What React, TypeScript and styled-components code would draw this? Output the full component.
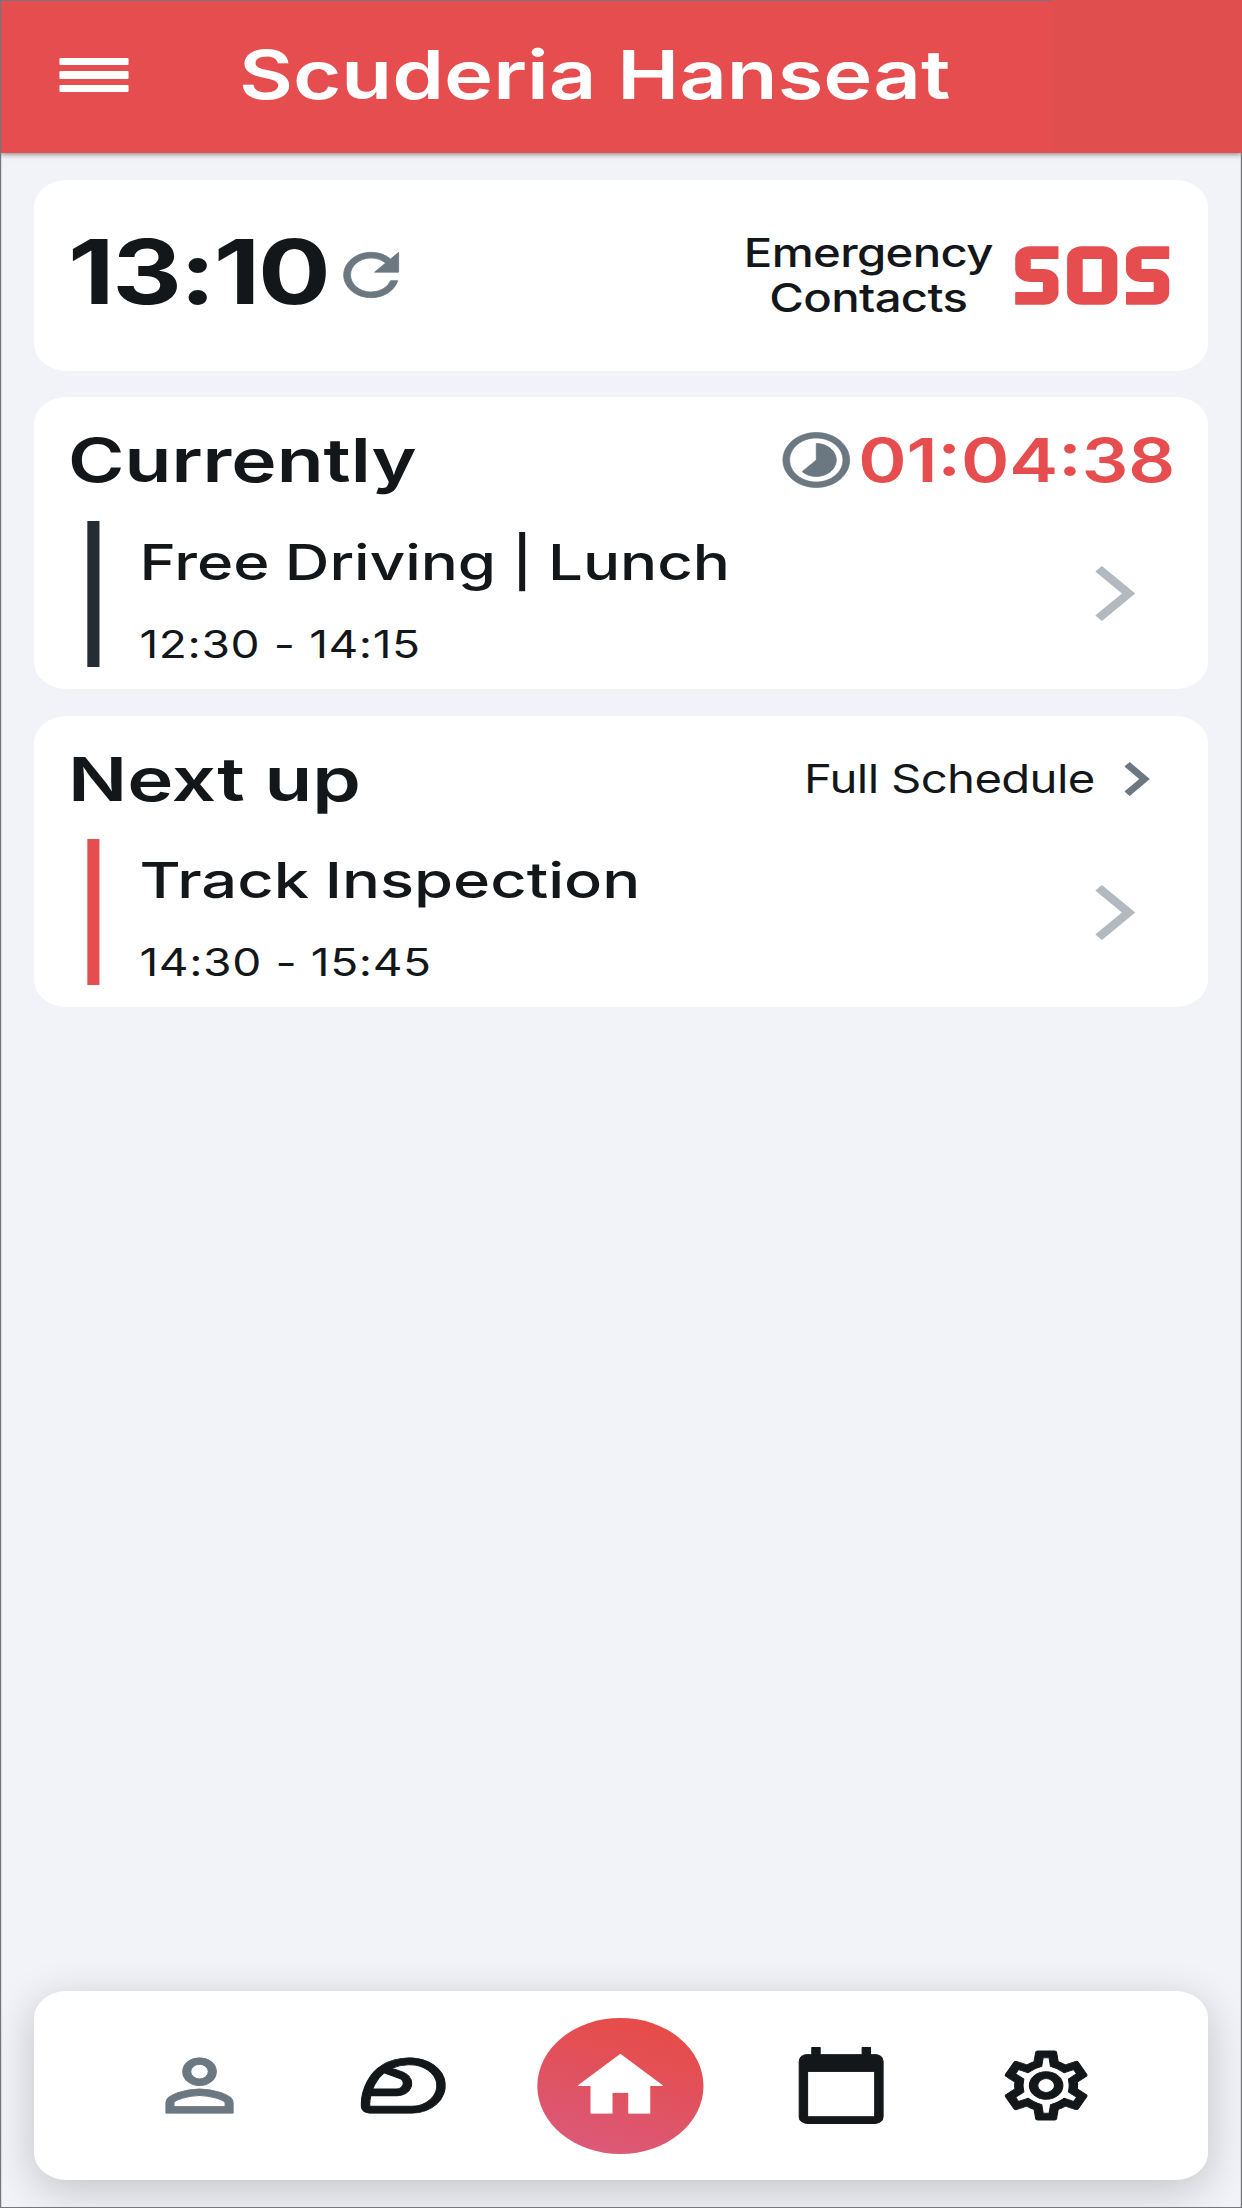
import {
  MdCalendarToday,
  MdHome,
  MdOutlineSettings,
  MdOutlineSportsMotorsports,
  MdPersonOutline,
  MdRefresh,
  MdSos,
  MdTimelapse
} from 'react-icons/md';
import styled, { createGlobalStyle } from 'styled-components';

const COLOR = {
  RED: '#e64d4f',
  RED_DARK: '#e14e4e',
  INK: '#13171a',
  BAR: '#262c33',
  SLATE: '#6b7781',
  SILVER: '#b3b9be',
  BG: '#f2f3f8',
  WHITE: '#ffffff'
};

const EVENTS = {
  current: { title: 'Free Driving | Lunch', time: '12:30 - 14:15' },
  next: { title: 'Track Inspection', time: '14:30 - 15:45' }
};

interface IEventProps {
  title: string;
  time: string;
  color: string;
  stretch: number;
}

const Event = ({ title, time, color, stretch }: IEventProps) => (
  <EventRow>
    <EventBar $color={color} />
    <EventText>
      <EventTitle $stretch={stretch}>{title}</EventTitle>
      <EventTime>{time}</EventTime>
    </EventText>
    <svg width="33" height="55" viewBox="0 0 33 55" fill={COLOR.SILVER}>
      <path d="M0 5.5L5.5 0L33 27.5L5.5 55L0 49.5L22 27.5z" />
    </svg>
  </EventRow>
);

const App = () => {
  return (
    <Screen>
      <GlobalStyle />
      <Header>
        <MenuButton aria-label="Menu">
          <MenuLine />
          <MenuLine />
          <MenuLine />
        </MenuButton>
        <Title>Scuderia Hanseat</Title>
        <HeaderEnd />
      </Header>
      <Main>
        <ClockCard>
          <Clock>13:10</Clock>
          <CardIcon>
            <MdRefresh size={68} color={COLOR.SLATE} />
          </CardIcon>
          <Emergency>
            Emergency
            <br />
            Contacts
          </Emergency>
          <CardIcon>
            <MdSos size={137} color={COLOR.RED} />
          </CardIcon>
        </ClockCard>
        <Card>
          <CardHead>
            <Heading $stretch={1.045}>Currently</Heading>
            <CardIcon>
              <MdTimelapse size={66} color={COLOR.SLATE} />
            </CardIcon>
            <Countdown>01:04:38</Countdown>
          </CardHead>
          <Event {...EVENTS.current} color={COLOR.BAR} stretch={1.029} />
        </Card>
        <Card>
          <CardHead>
            <Heading $stretch={1.063}>Next up</Heading>
            <ScheduleLink>
              Full Schedule
              <svg width="21" height="34" viewBox="0 0 21 34" fill={COLOR.SLATE}>
                <path d="M0 4.4L4.4 0L21 17L4.4 34L0 29.6L12.3 17z" />
              </svg>
            </ScheduleLink>
          </CardHead>
          <Event {...EVENTS.next} color={COLOR.RED} stretch={1.053} />
        </Card>
      </Main>
      <NavBar>
        <NavItem $color={COLOR.SLATE}>
          <MdPersonOutline />
        </NavItem>
        <NavItem>
          <MdOutlineSportsMotorsports />
        </NavItem>
        <HomeItem>
          <MdHome />
        </HomeItem>
        <NavItem>
          <MdCalendarToday />
        </NavItem>
        <NavItem>
          <MdOutlineSettings />
        </NavItem>
      </NavBar>
      <Frame />
    </Screen>
  );
};

const GlobalStyle = createGlobalStyle`
  body {
    margin: 0;
    overflow: hidden;
    background: ${COLOR.BG};
  }
  * {
    box-sizing: border-box;
  }
  svg {
    display: block;
    flex-shrink: 0;
  }
`;

/* the app is laid out 1024 wide and stretched to the full display */
const Screen = styled.div`
  position: relative;
  display: flex;
  flex-direction: column;
  width: 1024px;
  height: 2208px;
  transform: scaleX(1.2129);
  transform-origin: 0 0;
  overflow: hidden;
  background: ${COLOR.BG};
  color: ${COLOR.INK};
  font-family: Inter, 'Liberation Sans', sans-serif;
`;

const Frame = styled.div`
  position: absolute;
  inset: 0;
  border: 1px solid #75767b;
  pointer-events: none;
`;

const Header = styled.header`
  display: flex;
  align-items: center;
  height: 153px;
  flex-shrink: 0;
  padding-left: 49px;
  background: ${COLOR.RED};
  box-shadow: 0 1px 5px rgba(0, 0, 0, 0.5);
`;

const MenuButton = styled.button`
  display: flex;
  flex-direction: column;
  gap: 6px;
  width: 57px;
  padding: 0;
  margin-bottom: 3px;
  border: none;
  background: none;
`;

const MenuLine = styled.span`
  height: 7.6px;
  border-radius: 1px;
  background: ${COLOR.WHITE};
`;

const Title = styled.h1`
  margin: 0 0 3px 91px;
  color: ${COLOR.WHITE};
  font-size: 67px;
  font-weight: 600;
  line-height: 80px;
  white-space: nowrap;
  transform: scaleX(1.022);
  transform-origin: 0 50%;
`;

const HeaderEnd = styled.div`
  position: relative;
  z-index: 1;
  width: 157px;
  height: 153px;
  margin-left: auto;
  background: ${COLOR.RED_DARK};
`;

const Main = styled.main`
  display: flex;
  flex-direction: column;
  flex: 1;
  gap: 26.6px;
  padding: 27px 28px 0;
`;

const Card = styled.section`
  height: 291.8px;
  border-radius: 27px;
  background: ${COLOR.WHITE};
`;

const ClockCard = styled(Card)`
  display: flex;
  align-items: center;
  height: 190.6px;
  padding: 0 27px 0 28px;
`;

/* icons sit a touch heavier than the stock outlines */
const CardIcon = styled.div`
  svg path:not([fill='none']) {
    stroke: currentColor;
    stroke-width: 0.25px;
    stroke-linejoin: round;
  }
`;

const Clock = styled.div`
  width: 216px;
  margin-bottom: 6px;
  font-size: 89px;
  font-weight: 700;
  line-height: 100px;
  letter-spacing: -1.8px;
  white-space: nowrap;
`;

const Emergency = styled.div`
  margin-left: auto;
  margin-right: 13.5px;
  font-size: 39px;
  font-weight: 500;
  line-height: 45px;
  letter-spacing: -0.55px;
  text-align: center;
`;

const CardHead = styled.div`
  display: flex;
  align-items: center;
  height: 123.5px;
  padding: 3px 27px 0 28px;
`;

const Heading = styled.h2<{ $stretch: number }>`
  margin: 0 auto 0 0;
  font-size: 60.5px;
  font-weight: 600;
  transform: scaleX(${({ $stretch }) => $stretch});
  transform-origin: 0 50%;
`;

const Countdown = styled.div`
  margin-left: 2px;
  color: ${COLOR.RED};
  font-size: 60.5px;
  font-weight: 600;
`;

const ScheduleLink = styled.a`
  display: flex;
  align-items: center;
  gap: 24px;
  padding-right: 21.5px;
  font-size: 39px;
  font-weight: 400;
  letter-spacing: -0.55px;
`;

const EventRow = styled.div`
  display: flex;
  align-items: center;
  height: 146px;
  padding: 0 60px 0 43.5px;
`;

const EventBar = styled.div<{ $color: string }>`
  width: 10.5px;
  height: 146px;
  background: ${({ $color }) => $color};
`;

const EventText = styled.div`
  display: flex;
  flex: 1;
  flex-direction: column;
  gap: 29px;
  height: 146px;
  padding: 11px 0 0 33px;
`;

const EventTitle = styled.div<{ $stretch: number }>`
  font-size: 49.5px;
  font-weight: 450;
  line-height: 60px;
  word-spacing: -1px;
  white-space: nowrap;
  transform: scaleX(${({ $stretch }) => $stretch});
  transform-origin: 0 50%;
`;

const EventTime = styled.div`
  font-size: 38px;
  line-height: 46px;
  letter-spacing: 0.5px;
`;

const NavBar = styled.nav`
  display: grid;
  grid-template-columns: 168px 168px 190px 174px 164px;
  align-items: center;
  justify-items: center;
  height: 189px;
  flex-shrink: 0;
  margin: 0 28px 28px;
  padding-left: 52.4px;
  border-radius: 27px;
  background: ${COLOR.WHITE};
  box-shadow: 0 10px 40px rgba(0, 0, 0, 0.2);
`;

const NavItem = styled(CardIcon)<{ $color?: string }>`
  color: ${({ $color }) => $color ?? COLOR.INK};
  font-size: 83px;
`;

const HomeItem = styled(NavItem)`
  display: flex;
  align-items: center;
  justify-content: center;
  width: 136.5px;
  height: 136px;
  border-radius: 50%;
  background: linear-gradient(200deg, #e64c49 15%, #da5a7c 95%);
  color: ${COLOR.WHITE};
`;

export default App;
